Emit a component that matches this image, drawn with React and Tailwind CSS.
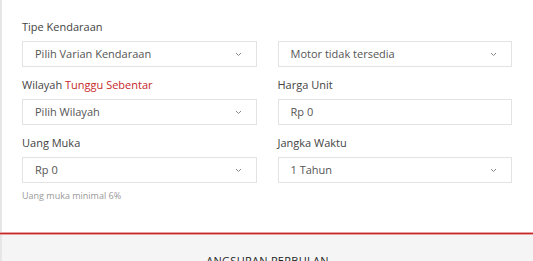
import React from 'react';

function Chevron() {
  return (
    <svg width="7" height="5" viewBox="0 0 7 5" className="text-[#888]">
      <path d="M1 1 L3.5 3.5 L6 1" fill="none" stroke="currentColor" strokeWidth="1" />
    </svg>
  );
}

function Select({ value }) {
  return (
    <div className="h-[26px] border border-[#e3e3e3] bg-white flex items-center justify-between pl-[12px] pr-[14px] text-[11px] text-[#555]">
      <span>{value}</span>
      <Chevron />
    </div>
  );
}

function Input({ value }) {
  return (
    <div className="h-[26px] border border-[#e3e3e3] bg-white flex items-center pl-[12px] text-[11px] text-[#555]">
      {value}
    </div>
  );
}

function Label({ children }) {
  return <div className="text-[11px] text-[#444] h-[14px] leading-[14px] mb-[7px]">{children}</div>;
}

export default function App() {
  return (
    <div className="w-[533px] h-[261px] overflow-hidden bg-white" style={{ fontFamily: '"Open Sans", sans-serif' }}>
      <div className="border-l-2 border-[#e6e6e6] pt-[20px] pl-[20px] pr-[21px] h-[232px]">
        <div className="grid grid-cols-2 gap-x-[21px] gap-y-[11px]">
          <div>
            <Label>Tipe Kendaraan</Label>
            <Select value="Pilih Varian Kendaraan" />
          </div>
          <div className="pt-[21px]">
            <Select value="Motor tidak tersedia" />
          </div>
          <div>
            <Label>
              Wilayah <span className="text-[#c62828]">Tunggu Sebentar</span>
            </Label>
            <Select value="Pilih Wilayah" />
          </div>
          <div>
            <Label>Harga Unit</Label>
            <Input value="Rp 0" />
          </div>
          <div>
            <Label>Uang Muka</Label>
            <Select value="Rp 0" />
            <div className="text-[9px] text-[#999] mt-[6px]">Uang muka minimal 6%</div>
          </div>
          <div>
            <Label>Jangka Waktu</Label>
            <Select value="1 Tahun" />
          </div>
        </div>
      </div>
      <div className="h-[3px] bg-[#c62828] border-t border-b border-[#e8a0a0]" />
      <div className="bg-[#f5f5f5] h-[30px] border-l-2 border-[#e6e6e6] flex justify-center pt-[18px]">
        <span className="text-[11px] text-[#222] tracking-wide">ANGSURAN PERBULAN</span>
      </div>
    </div>
  );
}
